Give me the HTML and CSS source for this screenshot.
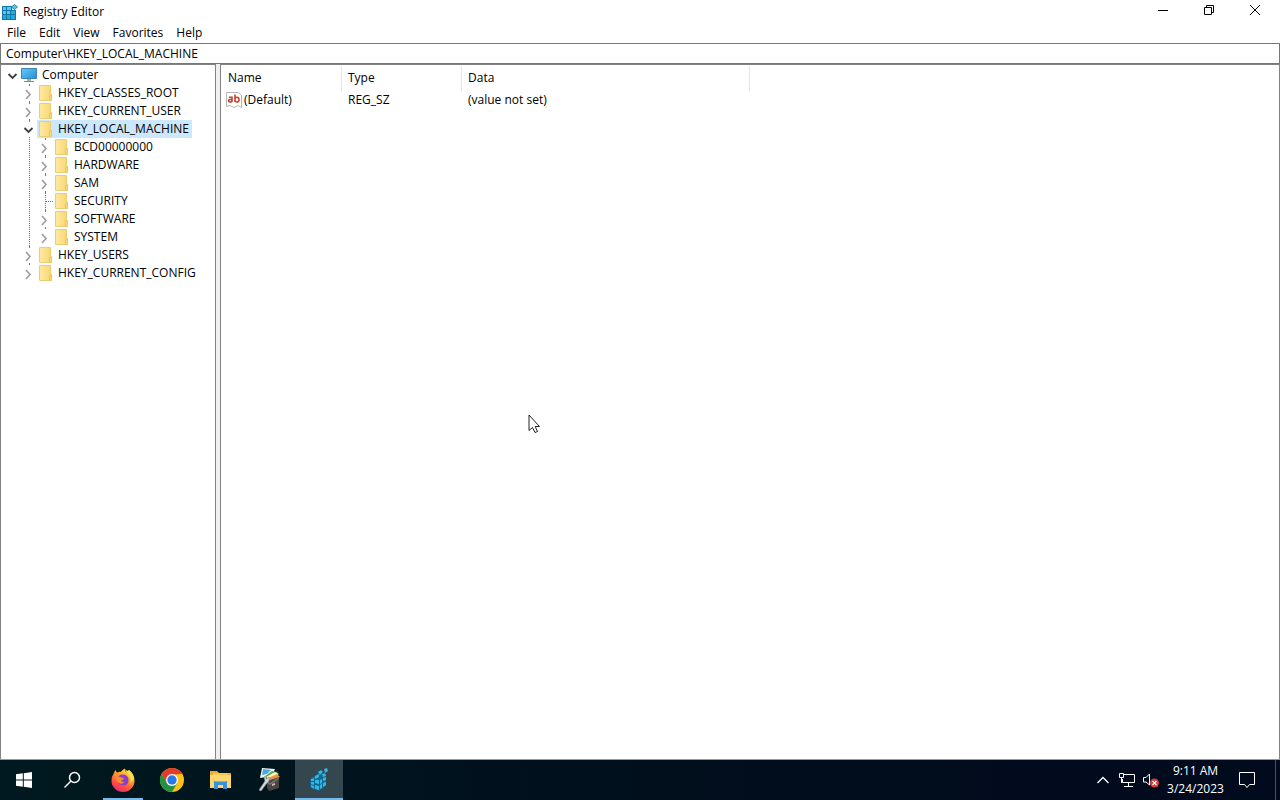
FILE: index.html
```html
<!DOCTYPE html>
<html lang="en">
<head>
<meta charset="utf-8">
<title>Registry Editor</title>
<link rel="stylesheet" href="styles.css">
</head>
<body>
<svg class="defs" width="0" height="0" aria-hidden="true">
  <defs>
    <linearGradient id="gFolder" x1="0" x2="1"><stop offset="0" stop-color="#ffe9a2"/><stop offset="1" stop-color="#f8d775"/></linearGradient>
    <linearGradient id="gScreen" x1="0" y1="0" x2="1" y2="1"><stop offset="0" stop-color="#6cc8f5"/><stop offset="1" stop-color="#1d8fdc"/></linearGradient>
    <linearGradient id="gFox" x1="0.8" y1="0" x2="0.3" y2="1"><stop offset="0" stop-color="#fff04a"/><stop offset="0.4" stop-color="#ff9a28"/><stop offset="0.75" stop-color="#ff4a45"/><stop offset="1" stop-color="#e8257e"/></linearGradient>
    <symbol id="folder" viewBox="0 0 16 18">
      <path d="M2.500 1.500H13.500V16.500H2.500Z" fill="url(#gFolder)" stroke="#ecce72"/>
      <path d="M12.500 11.500L14.500 10.500V16.500H12.500Z" fill="#fbdc7c" stroke="#e6c45f"/>
    </symbol>
    <symbol id="right" viewBox="0 0 15 18"><path d="M5 6L9 10.500L5 15" fill="none" stroke="#a0a0a0" stroke-width="1.700"/></symbol>
    <symbol id="down" viewBox="0 0 15 18"><path d="M3.500 8L7.500 12L11.500 8" fill="none" stroke="#404040" stroke-width="1.800"/></symbol>
  </defs>
</svg>

<main class="window">
  <header class="titlebar">
    <svg class="app-icon" viewBox="0 0 16 16" aria-hidden="true">
      <path d="M0 2H10V6H14V16H0Z" fill="#1277a8"/>
      <path d="M1 7H4V10H1ZM5 7H8V10H5ZM9 7H13V10H9ZM1 11H4V15H1ZM5 11H8V15H5ZM9 11H13V15H9Z" fill="#27a9d8"/>
      <path d="M1 3H4V6H1ZM5 3H9V6H5ZM1 7H4V10H1ZM5 7H8V10H5Z" fill="#52c8ea"/>
      <path d="M12.500 0.500L15.500 3L12.500 5.500L9.500 3Z" fill="#5cc3e2" stroke="#1f86b0"/>
    </svg>
    <h1 class="title">Registry Editor</h1>
    <div class="controls">
      <button class="control" aria-label="Minimize"><svg viewBox="0 0 12 12"><path d="M1 6.500H11" /></svg></button>
      <button class="control" aria-label="Restore"><svg viewBox="0 0 12 12"><path d="M1.500 3.500H8.500V10.500H1.500ZM3.500 3.500V1.500H10.500V8.500H8.500"/></svg></button>
      <button class="control" aria-label="Close"><svg viewBox="0 0 12 12"><path d="M1 1L11 11M11 1L1 11"/></svg></button>
    </div>
  </header>
  <nav class="menu" aria-label="Menu bar">
    <button>File</button><button>Edit</button><button>View</button><button>Favorites</button><button>Help</button>
  </nav>
  <input class="address" type="text" aria-label="Address" value="Computer\HKEY_LOCAL_MACHINE">
  <div class="panes">
    <nav class="tree" aria-label="Registry keys">
      <ul class="root">
        <li>
          <div class="row"><button class="toggle" aria-label="Collapse Computer"><svg viewBox="0 0 15 18"><use href="#down"/></svg></button>
            <svg class="key-icon" viewBox="0 0 16 18" aria-hidden="true"><path d="M0.500 2.500H15.500V12.500H0.500Z" fill="url(#gScreen)" stroke="#3c86b4"/><path d="M6 13H10V15H6Z" fill="#9fb0ba"/><path d="M3 15.500H13" stroke="#7c8a94"/></svg><span class="label">Computer</span></div>
          <ul>
            <li><div class="row"><button class="toggle" aria-label="Expand"><svg viewBox="0 0 15 18"><use href="#right"/></svg></button><svg class="key-icon"><use href="#folder"/></svg><span class="label">HKEY_CLASSES_ROOT</span></div></li>
            <li><div class="row"><button class="toggle" aria-label="Expand"><svg viewBox="0 0 15 18"><use href="#right"/></svg></button><svg class="key-icon"><use href="#folder"/></svg><span class="label">HKEY_CURRENT_USER</span></div></li>
            <li><div class="row selected"><button class="toggle" aria-label="Collapse"><svg viewBox="0 0 15 18"><use href="#down"/></svg></button><svg class="key-icon"><use href="#folder"/></svg><span class="label">HKEY_LOCAL_MACHINE</span></div>
              <ul>
                <li><div class="row"><button class="toggle" aria-label="Expand"><svg viewBox="0 0 15 18"><use href="#right"/></svg></button><svg class="key-icon"><use href="#folder"/></svg><span class="label">BCD00000000</span></div></li>
                <li><div class="row"><button class="toggle" aria-label="Expand"><svg viewBox="0 0 15 18"><use href="#right"/></svg></button><svg class="key-icon"><use href="#folder"/></svg><span class="label">HARDWARE</span></div></li>
                <li><div class="row"><button class="toggle" aria-label="Expand"><svg viewBox="0 0 15 18"><use href="#right"/></svg></button><svg class="key-icon"><use href="#folder"/></svg><span class="label">SAM</span></div></li>
                <li><div class="row"><span class="leaf"></span><svg class="key-icon"><use href="#folder"/></svg><span class="label">SECURITY</span></div></li>
                <li><div class="row"><button class="toggle" aria-label="Expand"><svg viewBox="0 0 15 18"><use href="#right"/></svg></button><svg class="key-icon"><use href="#folder"/></svg><span class="label">SOFTWARE</span></div></li>
                <li><div class="row"><button class="toggle" aria-label="Expand"><svg viewBox="0 0 15 18"><use href="#right"/></svg></button><svg class="key-icon"><use href="#folder"/></svg><span class="label">SYSTEM</span></div></li>
              </ul>
            </li>
            <li><div class="row"><button class="toggle" aria-label="Expand"><svg viewBox="0 0 15 18"><use href="#right"/></svg></button><svg class="key-icon"><use href="#folder"/></svg><span class="label">HKEY_USERS</span></div></li>
            <li><div class="row"><button class="toggle" aria-label="Expand"><svg viewBox="0 0 15 18"><use href="#right"/></svg></button><svg class="key-icon"><use href="#folder"/></svg><span class="label">HKEY_CURRENT_CONFIG</span></div></li>
          </ul>
        </li>
      </ul>
    </nav>
    <div class="splitter"></div>
    <section class="values">
      <table>
        <colgroup><col class="col-name"><col class="col-type"><col class="col-data"></colgroup>
        <thead><tr><th>Name</th><th>Type</th><th>Data</th></tr></thead>
        <tbody><tr><td><div class="value-name">
          <svg class="value-icon" viewBox="0 0 16 16" aria-hidden="true"><path d="M0.500 0.500H12L15.500 3V15.500L12 13.500L8 15.500L4 13.500L0.500 14.500Z" fill="#fff" stroke="#b5b5b5"/><g fill="none" stroke="#c8402c" stroke-width="1.600"><path d="M3 5.300H6V10M6 7.500H4Q2.500 7.500 2.500 8.800Q2.500 10 4 10Q6 10 6 8.500"/><path d="M9 2.500V10M9 6.500Q9.500 5.200 11 5.200Q13 5.200 13 7.700Q13 10 11 10Q9.500 10 9 8.800"/></g></svg>
          <span>(Default)</span></div></td><td>REG_SZ</td><td>(value not set)</td></tr></tbody>
      </table>
    </section>
  </div>
</main>

<footer class="taskbar">
  <button class="task" aria-label="Start"><svg width="16" height="16" viewBox="0 0 16 16"><path d="M0 2.300L6.800 1.300V7.500H0ZM7.800 1.200L16 0V7.500H7.800ZM0 8.500H6.800V14.700L0 13.700ZM7.800 8.500H16V16L7.800 14.800Z" fill="#fff"/></svg></button>
  <button class="task" aria-label="Search"><svg width="18" height="18" viewBox="0 0 18 18"><g fill="none" stroke="#fff" stroke-width="1.500"><circle cx="11.500" cy="6.500" r="5"/><path d="M8 10L1.500 16.500"/></g></svg></button>
  <button class="task open" aria-label="Firefox"><svg width="24" height="24" viewBox="0 0 24 24"><path d="M3 5Q3.500 3 4.500 2Q5 4 6.500 4.500Q8 3.500 9.500 4Q11.500 2 13.500 0.500Q13.500 3 16 4.500Q17.500 3 18 2Q23.500 6 23.500 13A11.500 11 0 0 1 .5 13Q.5 8 3 5Z" fill="url(#gFox)"/><path d="M13.500 0.500Q14 3 17 5.500L18 8Q21 12 18.500 16L23 11Q22 5 18 2Q16 4 13.500 0.500Z" fill="#ffe047"/><path d="M6.500 10Q8 6 12 6.500Q17.500 7 17.500 12Q17.500 17.500 12 17.500Q7.500 17 6.500 13Z" fill="#8c3fc4"/><path d="M5 9Q8 8 10 9.500L13 10Q12.500 12 10 12.500Q10.500 14.500 13.500 13.500Q11.500 17 8 15Q5 13 5 9Z" fill="#ff8b2b"/></svg></button>
  <button class="task" aria-label="Chrome"><svg width="24" height="24" viewBox="0 0 24 24"><circle cx="12" cy="12" r="12" fill="#fbc116"/><path d="M1.600 6A12 12 0 0 1 22.400 6L12 6.500L6.800 15Z" fill="#e33b2e"/><path d="M1.600 6A12 12 0 0 0 12 24L17.200 15L12 17.400L6.800 15Z" fill="#229342"/><circle cx="12" cy="12" r="6" fill="#fff"/><circle cx="12" cy="12" r="4.700" fill="#2979e8"/></svg></button>
  <button class="task" aria-label="File Explorer"><svg width="24" height="24" viewBox="0 0 24 24"><path d="M1 3H8L10 5H22V20H1Z" fill="#e9ad37"/><path d="M1 7H22V20H1Z" fill="#fcd76f"/><path d="M4 5H19V7H4Z" fill="#f7c64f"/><path d="M5 13H18V21H14V17H9V21H5Z" fill="#3b91d8"/><path d="M6 13H17V14H6Z" fill="#6ebaf0"/></svg></button>
  <button class="task" aria-label="Registry tools"><svg width="24" height="24" viewBox="0 0 24 24"><path d="M4 0L17 1L14 8L2 10Z" fill="#eef8fb"/><path d="M5 1L13 2L9 6L4 7Z" fill="#4ba6dc"/><path d="M6 9L14 3L20 4L12 10Z" fill="#59a94b"/><path d="M8 9L17 4L21 6L12 12Z" fill="#fff2c8"/><path d="M8 11L19 6L22 9L12 14Z" fill="#e49a3e"/><path d="M9 13L21 9V20L11 23L9 20Z" fill="#4b4542"/><path d="M9 13L12 15L21 9V11L12 17L9 15Z" fill="#77706b"/><path d="M14 16L17 15V17L14 18Z" fill="#c4beb8"/><path d="M1 22L7 13L6 9L8 8L8 11L11 9L11 13L9 15L3 23Z" fill="#d6d9db" stroke="#85898d" stroke-width=".6"/></svg></button>
  <button class="task open active" aria-label="Registry Editor"><svg width="24" height="24" viewBox="0 0 24 24"><path d="M3 11L9 7L13 5L17 9L19 8V18L12 23L3 19Z" fill="#126990"/><g fill="#35b5e5"><path d="M4 11L7 10V13L4 13ZM8 8L12 6V9L8 11ZM4 14L7 14V17L4 16ZM8 12L12 12V16L8 15ZM13 12L15 11V15L13 16ZM16 10L19 9V12L16 13ZM4 17L7 18V21L4 19ZM8 17L12 18V22L8 21ZM13 17L15 16V20L13 21ZM16 15L19 14V17L16 19Z"/><path d="M11 4L14 2L16 4L13 7ZM17 1L20 0L21 3L18 5ZM15 6L18 5L19 8L16 9Z"/></g></svg></button>
  <div class="tray">
    <button class="tray-button" aria-label="Show hidden icons"><svg width="14" height="14" viewBox="0 0 14 14"><path d="M1.500 10L7 4.500L12.500 10" fill="none" stroke="#fff" stroke-width="1.300"/></svg></button>
    <button class="tray-button" aria-label="Network"><svg width="18" height="16" viewBox="0 0 18 16"><g fill="none" stroke="#fff"><path d="M6 2.500H16.500V10.500H4.500V7M10.500 11V14M6 14.500H15M1.500 1.500H5.500V5.500H1.500ZM3.500 6V11M3.500 8.500H5"/></g></svg></button>
    <button class="tray-button" aria-label="Volume muted"><svg width="18" height="18" viewBox="0 0 18 18"><path d="M1.500 6.500H4L7.500 3V14L4 11H1.500Z" fill="none" stroke="#fff"/><circle cx="12.500" cy="12" r="4.500" fill="#d63c3c"/><path d="M10.500 10L14.500 14M14.500 10L10.500 14" stroke="#fff" stroke-width="1.200"/></svg></button>
    <button class="clock"><span>9:11 AM</span><span>3/24/2023</span></button>
    <button class="notice" aria-label="Notifications"><svg width="18" height="18" viewBox="0 0 18 18"><path d="M1.500 1.500H16.500V13.500H11.500L9 16.500L6.500 13.500H1.500Z" fill="none" stroke="#fff"/></svg></button>
    <button class="desktop" aria-label="Show desktop"></button>
  </div>
</footer>
<svg class="cursor" width="13" height="20" viewBox="0 0 13 20" aria-hidden="true"><path d="M1 1V16.500L4.500 13.500L7 18.500L9.500 17.500L7.200 12.500H11.500Z" fill="#fff" stroke="#222"/></svg>
</body>
</html>
```

FILE: styles.css
```css
* { box-sizing: border-box; }

body {
  margin: 0;
  min-height: 100vh;
  display: flex;
  flex-direction: column;
  background: #fff;
  color: #000;
  font: 12px/18px "Open Sans", "Noto Sans", sans-serif;
}

button {
  margin: 0;
  padding: 0;
  border: 0;
  background: none;
  color: inherit;
  font: inherit;
}

svg { display: block; flex: none; }
.defs { position: absolute; }

.window {
  flex: 1;
  display: flex;
  flex-direction: column;
}

.titlebar { display: flex; align-items: center; height: 23px; padding-left: 2px; }
.app-icon { width: 16px; height: 16px; }
.title { margin: 0 0 0 5px; font-size: 12px; font-weight: 400; }
.controls { display: flex; margin-left: auto; padding-right: 2px; }
.control { display: grid; place-items: center; width: 46px; height: 23px; padding-bottom: 3px; }
.control svg { width: 12px; height: 12px; fill: none; stroke: #000; }

.menu { display: flex; gap: 13px; height: 20px; padding-left: 7px; }

.address {
  width: 100%;
  height: 21px;
  padding: 0 5px;
  border: 1px solid #777;
  color: inherit;
  font: inherit;
  outline: 0;
}

.panes { flex: 1; display: flex; border-bottom: 1px solid #999; }

.tree { width: 216px; padding: 1px 0; border: 1px solid #828282; border-bottom: 0; }
.tree ul { margin: 0; padding: 0 0 0 16px; list-style: none; }
.tree .root { padding: 0 0 0 4px; }
.tree li { position: relative; }

/* Dotted branch connectors between sibling keys. */
.root ul > li::before {
  content: "";
  position: absolute;
  top: 0;
  bottom: 0;
  left: 8px;
  border-left: 1px dotted #777;
}
.root ul > li:last-child::before { bottom: auto; height: 9px; }

.row { position: relative; display: flex; align-items: center; height: 18px; }
.toggle { width: 15px; height: 14px; overflow: hidden; background: #fff; display: flex; align-items: center; margin-right: 1px; }
.toggle svg { width: 15px; height: 18px; }
.leaf { width: 16px; padding-left: 9px; }
.leaf::after { content: ""; display: block; border-top: 1px dotted #777; }
.key-icon { width: 16px; height: 18px; }
.label { height: 18px; padding: 0 3px 0 5px; white-space: nowrap; }
.selected .key-icon, .selected .label { background: #cce8ff; }

.splitter { width: 4px; background: #f0f0f0; }
.values { flex: 1; min-width: 0; border: 1px solid #828282; border-bottom: 0; }

table { border-collapse: separate; border-spacing: 0; table-layout: fixed; width: 529px; margin-top: 1px; }
.col-name { width: 121px; }
.col-type { width: 120px; }
.col-data { width: 288px; }
th { height: 25px; padding: 0 6px 2px; border-right: 1px solid #e5e5e5; font-weight: 400; text-align: left; }
th:first-child { padding-left: 7px; }
td { height: 18px; padding: 0 6px; }
td:first-child { padding-left: 5px; }
.value-name { display: flex; align-items: center; gap: 2px; }
.value-icon { width: 16px; height: 16px; }

.taskbar {
  display: flex;
  height: 40px;
  background: linear-gradient(90deg, #00191f, #010d1c 60%, #020a1e);
  color: #fff;
}
.task { display: grid; place-items: center; width: 48px; margin-right: 1px; }
.task:first-child { margin-right: 0; }
.open { border-bottom: 2px solid #76b9ed; padding-top: 2px; width: 40px; margin: 0 5px 0 6px; }
.open.active { width: 48px; margin: 0; background: #34474e; }

.tray { display: flex; align-items: center; margin-left: auto; height: 40px; }
.tray-button { display: grid; place-items: center; width: 24px; height: 40px; }
.clock { display: flex; flex-direction: column; align-items: center; width: 65px; }
.notice { display: grid; place-items: center; width: 38px; height: 40px; }
.desktop { width: 5px; height: 40px; margin-left: 9px; border-left: 1px solid #46505e; }

.cursor { position: absolute; left: 528px; top: 414px; }
```
